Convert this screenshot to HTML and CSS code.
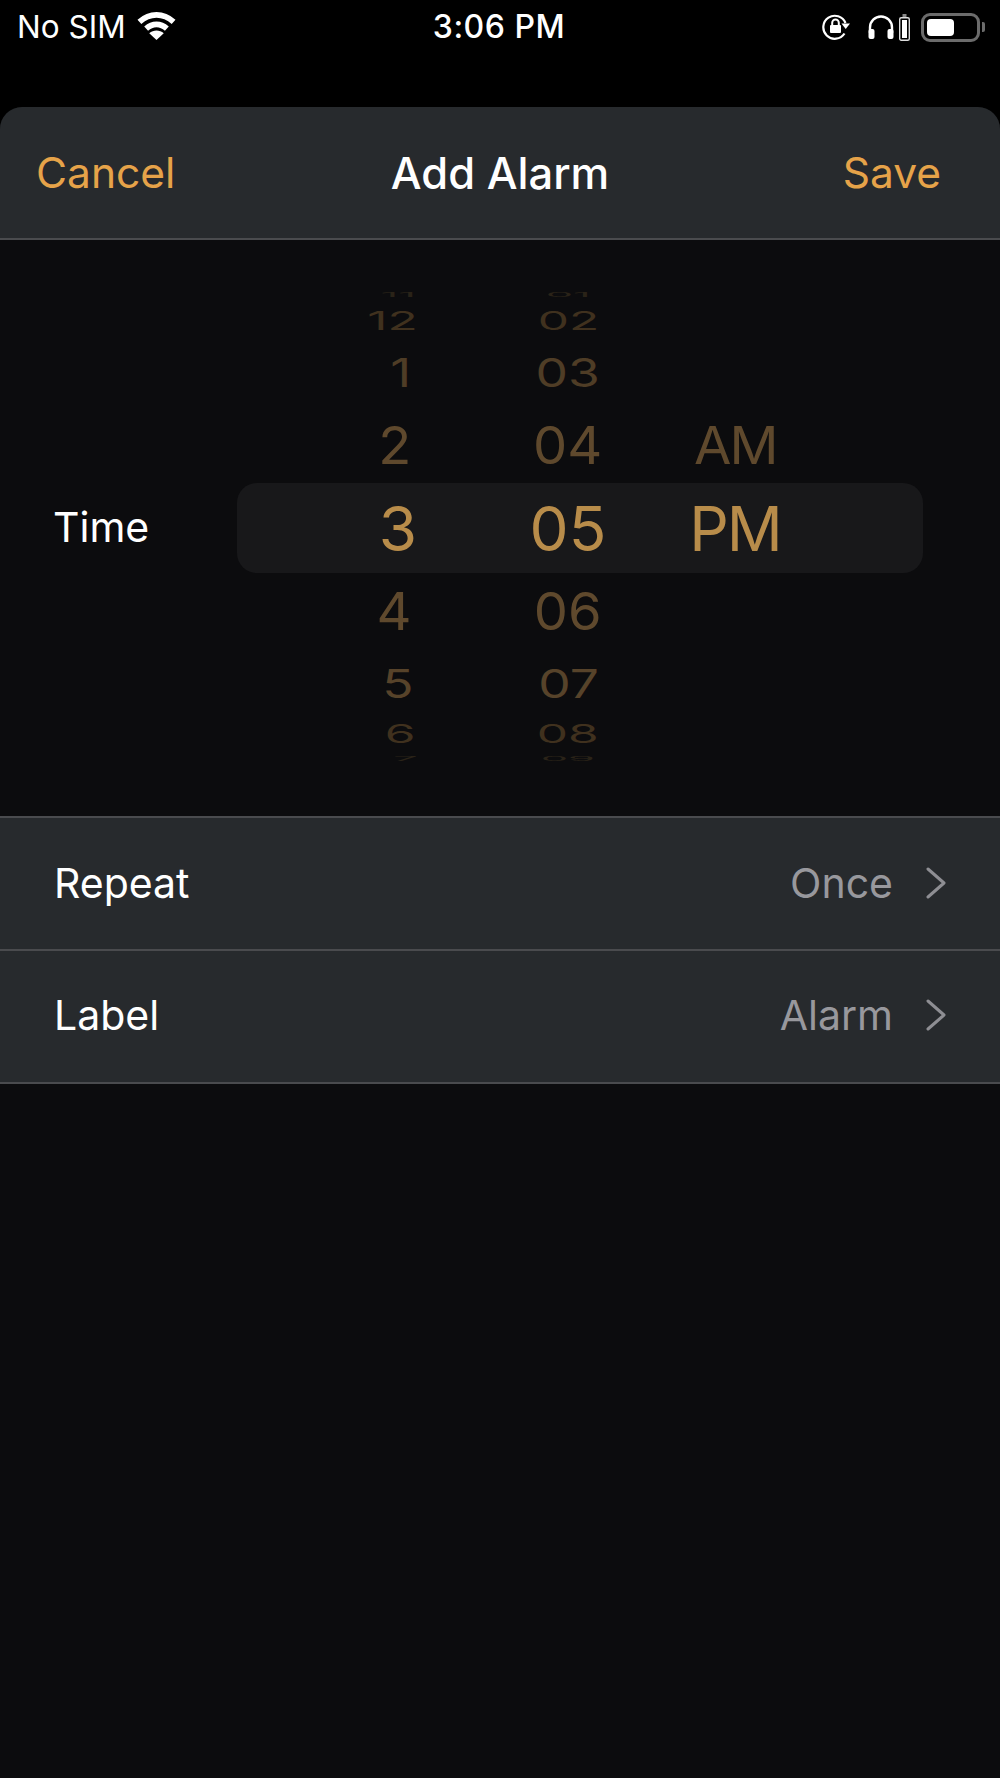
FILE: index.html
```html
<!DOCTYPE html>
<html lang="en">
<head>
<meta charset="utf-8">
<title>Add Alarm</title>
<link rel="stylesheet" href="styles.css">
</head>
<body>
<div class="screen">
  <div class="status">
    <div class="status-left">
      <span class="carrier">No SIM</span>
      <svg class="wifi" viewBox="0 0 39 28" aria-hidden="true">
        <path class="wifi-arc" d="M3 10.5C13 1.5 26 1.5 36 10.5"/>
        <path class="wifi-arc" d="M9.5 17C15.5 11.5 23.5 11.5 29.5 17"/>
        <path class="wifi-dot" d="M19.5 28L12.5 21.5C16.5 18 22.5 18 26.5 21.5Z"/>
      </svg>
    </div>
    <span class="clock">3:06 PM</span>
    <div class="status-right">
      <svg class="rotlock" viewBox="0 0 28 26" aria-hidden="true">
        <path class="rot-ring" d="M22.5 19.5A11.5 11.5 0 1 1 23.5 9"/>
        <path class="rot-fill" d="M19.5 9.5H28L23.7 15Z"/>
        <rect class="rot-fill" x="8" y="11" width="11" height="8" rx="1"/>
        <path class="rot-shackle" d="M10.2 11V8.8a3.3 3.3 0 0 1 6.6 0V11"/>
      </svg>
      <svg class="phones" viewBox="0 0 26 24" aria-hidden="true">
        <path class="phones-band" d="M2 18V12.500a11 11 0 0 1 22 0V18"/>
        <rect class="rot-fill" x="0.500" y="14" width="6" height="10" rx="2"/>
        <rect class="rot-fill" x="19.500" y="14" width="6" height="10" rx="2"/>
      </svg>
      <svg class="minibat" viewBox="0 0 11 27" aria-hidden="true">
        <rect class="rot-fill minibat-nub" x="3.500" y="0" width="4" height="3"/>
        <rect class="minibat-case" x="0.700" y="3.700" width="9.600" height="22.600" rx="1.500"/>
        <rect class="rot-fill" x="3" y="6" width="5" height="18"/>
      </svg>
      <div class="battery">
        <div class="battery-case"><div class="battery-level"></div></div>
        <div class="battery-nub"></div>
      </div>
    </div>
  </div>

  <main class="sheet">
    <header class="nav">
      <span class="nav-action">Cancel</span>
      <span class="nav-title">Add Alarm</span>
      <span class="nav-action">Save</span>
    </header>

    <section class="picker">
      <div class="picker-band"></div>
      <span class="picker-label">Time</span>
      <div class="wheels">
        <div class="wheel wheel-hour">
          <div class="r rm4"><span>11</span></div>
          <div class="r rm3"><span>12</span></div>
          <div class="r rm2"><span>1</span></div>
          <div class="r rm1"><span>2</span></div>
          <div class="r r0"><span>3</span></div>
          <div class="r rp1"><span>4</span></div>
          <div class="r rp2"><span>5</span></div>
          <div class="r rp3"><span>6</span></div>
          <div class="r rp4"><span>7</span></div>
        </div>
        <div class="wheel">
          <div class="r rm4"><span>01</span></div>
          <div class="r rm3"><span>02</span></div>
          <div class="r rm2"><span>03</span></div>
          <div class="r rm1"><span>04</span></div>
          <div class="r r0"><span>05</span></div>
          <div class="r rp1"><span>06</span></div>
          <div class="r rp2"><span>07</span></div>
          <div class="r rp3"><span>08</span></div>
          <div class="r rp4"><span>09</span></div>
        </div>
        <div class="wheel wheel-ampm">
          <div class="r rm4"></div>
          <div class="r rm3"></div>
          <div class="r rm2"></div>
          <div class="r rm1"><span>AM</span></div>
          <div class="r r0"><span>PM</span></div>
          <div class="r rp1"></div>
          <div class="r rp2"></div>
          <div class="r rp3"></div>
          <div class="r rp4"></div>
        </div>
      </div>
    </section>

    <section class="list">
      <div class="row">
        <span class="row-label">Repeat</span>
        <span class="row-value">Once</span>
        <svg class="chev" viewBox="0 0 20 32" aria-hidden="true"><path d="M2 2L18 16L2 30"/></svg>
      </div>
      <div class="row">
        <span class="row-label">Label</span>
        <span class="row-value">Alarm</span>
        <svg class="chev" viewBox="0 0 20 32" aria-hidden="true"><path d="M2 2L18 16L2 30"/></svg>
      </div>
    </section>
  </main>
</div>
</body>
</html>
```
FILE: styles.css
```css
* { box-sizing: border-box; }
html, body { margin: 0; padding: 0; background: #000; }
body { font-family: Inter, "Liberation Sans", sans-serif; color: #fff; }
.screen { width: 1000px; height: 1778px; display: flex; flex-direction: column; overflow: hidden; }

.status { height: 107px; flex: none; padding: 0 15px 0 17px; display: grid; grid-template-columns: 1fr auto 1fr; align-items: start; }
.status-left { display: flex; align-items: center; gap: 10px; height: 54px; }
.carrier { font-size: 31.5px; line-height: 54px; }
.wifi { width: 41px; height: 29px; margin-top: -3px; }
.wifi-arc { fill: none; stroke: #fff; stroke-width: 5.5px; }
.wifi-dot { fill: #fff; }
.clock { font-size: 32px; line-height: 54px; font-weight: 500; letter-spacing: .5px; position: relative; left: -2px; }
.status-right { display: flex; align-items: center; justify-content: flex-end; height: 54px; }
.rotlock { width: 28px; height: 26px; margin-right: 18px; }
.rot-ring, .rot-shackle, .phones-band { fill: none; stroke: #fff; }
.rot-ring { stroke-width: 2.2px; }
.rot-shackle { stroke-width: 2px; }
.rot-fill { fill: #fff; }
.phones { width: 26px; height: 24px; margin-right: 5px; }
.phones-band { stroke-width: 2.400px; }
.minibat { width: 11px; height: 27px; margin-right: 11px; }
.minibat-case { fill: none; stroke: #ddd; stroke-width: 1.400px; }
.minibat-nub { fill: #888; }
.battery { display: flex; align-items: center; gap: 2px; }
.battery-case { width: 59px; height: 29px; border: 3px solid #6b6b6b; border-radius: 9px; padding: 3px; }
.battery-level { width: 27px; height: 100%; background: #fff; border-radius: 4px; }
.battery-nub { width: 3px; height: 10px; background: #6b6b6b; border-radius: 0 2px 2px 0; }

.sheet { flex: 1; background: #0c0c0e; border-radius: 22px 22px 0 0; overflow: hidden; display: flex; flex-direction: column; }
.nav { height: 133px; flex: none; padding: 0 59px 0 36px; background: #272a2d; border-bottom: 2px solid #4a4b4e; display: flex; align-items: center; justify-content: space-between; position: relative; }
.nav-action { font-size: 42.5px; color: #e6a349; }
.nav-title { font-size: 43.5px; font-weight: 500; position: absolute; left: 0; right: 0; text-align: center; }

.picker { height: 576px; flex: none; position: relative; display: flex; align-items: center; padding: 2px 0 0 53px; }
.picker-band { position: absolute; left: 237px; top: 243px; width: 686px; height: 90px; background: #18181a; border-radius: 20px; }
.picker-label { width: 295px; font-size: 41px; position: relative; top: -2px; }
.wheels { display: flex; gap: 70px; position: relative; }
.wheel { width: 100px; display: flex; flex-direction: column; align-items: center; font-size: 62px; }
.wheel-ampm { margin-left: -3px; }
.r { width: 100%; display: flex; justify-content: center; align-items: center; white-space: nowrap; }
.r span { display: block; line-height: 1; }
.rm4 { height: 5px; color: #2a2318; }
.rm3 { height: 47px; color: #40311e; }
.rm2 { height: 55px; color: #4f3d26; padding-top: 2px; }
.rm1 { height: 87px; color: #5f492d; padding-top: 5px; }
.r0 { height: 85px; color: #b88c4a; }
.rp1 { height: 81px; color: #5f492d; }
.rp2 { height: 63px; color: #57432a; }
.rp3 { height: 37px; color: #40311e; }
.rp4 { height: 13px; color: #2a2318; }
.rm4 span, .rp4 span { transform: scale(.7, .1); }
.rm3 span, .rp3 span { transform: scale(.8, .41); }
.rm2 span, .rp2 span { transform: scale(.83, .63); }
.rm1 span, .rp1 span { transform: scale(.875, .83); }
.wheel-hour .rm3 { padding-right: 10px; }
.wheel-hour .rm2 { padding-left: 5px; }
.wheel-hour .rm1 { padding-right: 7px; }
.wheel-hour .rp1 { padding-right: 7px; }
.wheel-hour .rp3 { padding-left: 4px; }
.wheel-hour .rp4 { padding-left: 16px; }
.wheel-ampm span { letter-spacing: -2px; }

.list { flex: none; }
.row { height: 133px; background: #272a2d; border-top: 2px solid #4a4b4e; display: flex; align-items: center; padding: 0 54px 2px 54px; }
.row:last-child { height: 135px; padding-bottom: 3px; border-bottom: 2px solid #4a4b4e; }
.row-label { font-size: 41px; flex: 1; }
.row-value { font-size: 41px; color: #98989d; margin-right: 33px; }
.chev { width: 20px; height: 32px; fill: none; stroke: #8e8e93; stroke-width: 3px; stroke-linecap: round; stroke-linejoin: round; }
```
